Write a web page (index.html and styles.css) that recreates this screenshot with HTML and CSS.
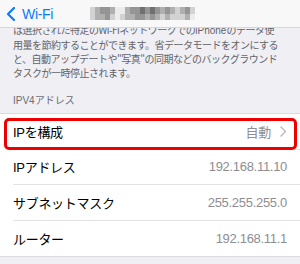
FILE: index.html
```html
<!DOCTYPE html>
<html lang="ja">
<head>
<meta charset="utf-8">
<link rel="stylesheet" href="styles.css">
</head>
<body>
<div class="screen">
  <header class="nav">
    <div class="back">
      <svg class="back-chev" width="10" height="14" viewBox="0 0 10 14"><path d="M8 1 L2 7 L8 13" fill="none" stroke="#0a7aff" stroke-width="2.2" stroke-linecap="round" stroke-linejoin="round"/></svg>
      <span class="back-label">Wi-Fi</span>
    </div>
    <div class="blur">
      <i class="s1"></i><i class="s2"></i><i class="s3"></i><i class="s3"></i><i class="s2"></i><i class="s0"></i><i class="s0"></i><i class="s2"></i><i class="s3"></i><i class="s3"></i><i class="s4"></i><i class="s3"></i><i class="s4"></i><i class="s3"></i><i class="s2"></i><i class="s3"></i><i class="s2"></i><i class="s1"></i><i class="s2"></i><i class="s3"></i><i class="s1"></i>
      <i class="s1"></i><i class="s2"></i><i class="s2"></i><i class="s3"></i><i class="s1"></i><i class="s0"></i><i class="s1"></i><i class="s2"></i><i class="s2"></i><i class="s3"></i><i class="s3"></i><i class="s2"></i><i class="s3"></i><i class="s2"></i><i class="s1"></i><i class="s2"></i><i class="s1"></i><i class="s1"></i><i class="s1"></i><i class="s2"></i><i class="s0"></i>
    </div>
  </header>
  <p class="desc">は選択された特定のWi-Fiネットワークでの<span class="lat">iPhone</span>のデータ使<br>用量を節約することができます。省データモードをオンにする<br>と、自動アップデートや"写真"の同期などのバックグラウンド<br>タスクが一時停止されます。</p>
  <div class="section-title">IPV4アドレス</div>
  <ul class="group">
    <li class="row highlighted">
      <span class="label">IPを構成</span>
      <span class="value">自動<svg class="chev" width="7" height="11" viewBox="0 0 7 11"><path d="M1 1 L5.5 5.5 L1 10" fill="none" stroke="#b8b8bd" stroke-width="1.4" stroke-linecap="round" stroke-linejoin="round"/></svg></span>
      <span class="mark"></span>
    </li>
    <li class="row"><span class="label">IPアドレス</span><span class="value">192.168.11.10</span></li>
    <li class="row"><span class="label">サブネットマスク</span><span class="value">255.255.255.0</span></li>
    <li class="row last"><span class="label">ルーター</span><span class="value">192.168.11.1</span></li>
  </ul>
</div>
</body>
</html>
```
FILE: styles.css
```css
* { box-sizing: border-box; }
html, body { margin: 0; padding: 0; }
body {
  background: #efeff4;
  font-family: "Liberation Sans", "Noto Sans CJK JP", sans-serif;
  width: 300px;
  height: 264px;
  overflow: hidden;
}
.screen { position: relative; width: 300px; height: 264px; overflow: hidden; }
.nav {
  position: absolute;
  left: 0; top: 0; right: 0;
  height: 28px;
  background: #f8f8f8;
  border-bottom: 1px solid #d6d6da;
  display: flex;
  align-items: center;
  z-index: 2;
}
.back { display: flex; align-items: center; padding-left: 6px; gap: 6px; }
.back-chev { display: block; }
.back-label { color: #0a7aff; font-size: 14px; letter-spacing: -0.3px; }
.blur {
  margin-left: 37px;
  display: grid;
  grid-template-columns: repeat(21, 5px);
  grid-auto-rows: 6.5px;
  filter: blur(0.5px);
}
.blur i { display: block; }
.s0 { background: #ececec; }
.s1 { background: #d2d2d2; }
.s2 { background: #b0b0b0; }
.s3 { background: #959595; }
.s4 { background: #707070; }
.desc {
  margin: 0;
  padding: 23px 13px 0;
  font-family: "Noto Sans CJK JP", sans-serif;
  font-size: 10px;
  line-height: 14px;
  color: #636368;
  letter-spacing: -0.5px;
  white-space: nowrap;
}
.desc .lat { font-family: "Liberation Sans", sans-serif; letter-spacing: 0; }
.section-title {
  margin: 14px 13px 5px;
  font-size: 10px;
  line-height: 14px;
  color: #6d6d72;
}
.group {
  list-style: none;
  margin: 0;
  padding: 0;
  background: #fff;
  border-top: 1px solid #dcdce0;
  border-bottom: 1px solid #dcdce0;
}
.row {
  position: relative;
  display: flex;
  align-items: center;
  justify-content: space-between;
  height: 35.5px;
  margin-left: 13px;
  padding-right: 13px;
  border-bottom: 1px solid #e2e2e5;
  font-size: 13px;
}
.row.last { border-bottom: none; }
.label { color: #000; letter-spacing: -0.3px; }
.value { color: #8e8e93; display: flex; align-items: center; gap: 9px; letter-spacing: -0.3px; }
.chev { display: block; }
.mark {
  position: absolute;
  left: -9px; top: 4px; right: 3px; bottom: -1px;
  border: 3px solid #ee0000;
  border-radius: 5px;
}
```
